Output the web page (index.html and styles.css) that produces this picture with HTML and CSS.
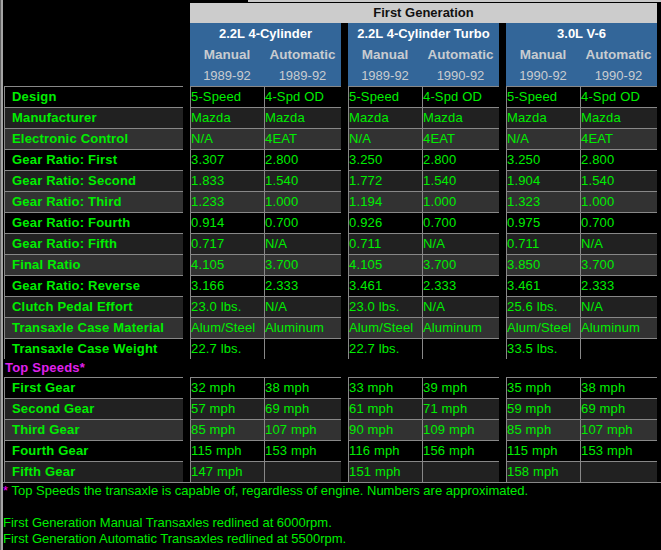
FILE: index.html
```html
<!DOCTYPE html>
<html>
<head>
<meta charset="utf-8">
<link rel="stylesheet" href="styles.css">
</head>
<body>
<div class="topstrip"></div>
<div class="head">
  <div class="gen">First Generation</div>
  <div class="groups">
    <div class="grp">
      <div class="grp-title">2.2L 4-Cylinder</div>
      <div class="grp-sub">
        <div class="ttype">Manual</div><div class="ttype">Automatic</div>
        <div class="yr">1989-92</div><div class="yr">1989-92</div>
      </div>
    </div>
    <div class="grp">
      <div class="grp-title">2.2L 4-Cylinder Turbo</div>
      <div class="grp-sub">
        <div class="ttype">Manual</div><div class="ttype">Automatic</div>
        <div class="yr">1989-92</div><div class="yr">1990-92</div>
      </div>
    </div>
    <div class="grp">
      <div class="grp-title">3.0L V-6</div>
      <div class="grp-sub">
        <div class="ttype">Manual</div><div class="ttype">Automatic</div>
        <div class="yr">1990-92</div><div class="yr">1990-92</div>
      </div>
    </div>
  </div>
</div>

<div class="table">
  <div class="row r0"><div class="lbl">Design</div><div class="c m g">5-Speed</div><div class="c a">4-Spd OD</div><div class="c m g">5-Speed</div><div class="c a">4-Spd OD</div><div class="c m g">5-Speed</div><div class="c a">4-Spd OD</div></div>
  <div class="row r1"><div class="lbl">Manufacturer</div><div class="c m g">Mazda</div><div class="c a">Mazda</div><div class="c m g">Mazda</div><div class="c a">Mazda</div><div class="c m g">Mazda</div><div class="c a">Mazda</div></div>
  <div class="row r2"><div class="lbl">Electronic Control</div><div class="c m g">N/A</div><div class="c a">4EAT</div><div class="c m g">N/A</div><div class="c a">4EAT</div><div class="c m g">N/A</div><div class="c a">4EAT</div></div>
  <div class="row r0"><div class="lbl">Gear Ratio: First</div><div class="c m g">3.307</div><div class="c a">2.800</div><div class="c m g">3.250</div><div class="c a">2.800</div><div class="c m g">3.250</div><div class="c a">2.800</div></div>
  <div class="row r1"><div class="lbl">Gear Ratio: Second</div><div class="c m g">1.833</div><div class="c a">1.540</div><div class="c m g">1.772</div><div class="c a">1.540</div><div class="c m g">1.904</div><div class="c a">1.540</div></div>
  <div class="row r2"><div class="lbl">Gear Ratio: Third</div><div class="c m g">1.233</div><div class="c a">1.000</div><div class="c m g">1.194</div><div class="c a">1.000</div><div class="c m g">1.323</div><div class="c a">1.000</div></div>
  <div class="row r0"><div class="lbl">Gear Ratio: Fourth</div><div class="c m g">0.914</div><div class="c a">0.700</div><div class="c m g">0.926</div><div class="c a">0.700</div><div class="c m g">0.975</div><div class="c a">0.700</div></div>
  <div class="row r1"><div class="lbl">Gear Ratio: Fifth</div><div class="c m g">0.717</div><div class="c a">N/A</div><div class="c m g">0.711</div><div class="c a">N/A</div><div class="c m g">0.711</div><div class="c a">N/A</div></div>
  <div class="row r2"><div class="lbl">Final Ratio</div><div class="c m g">4.105</div><div class="c a">3.700</div><div class="c m g">4.105</div><div class="c a">3.700</div><div class="c m g">3.850</div><div class="c a">3.700</div></div>
  <div class="row r0"><div class="lbl">Gear Ratio: Reverse</div><div class="c m g">3.166</div><div class="c a">2.333</div><div class="c m g">3.461</div><div class="c a">2.333</div><div class="c m g">3.461</div><div class="c a">2.333</div></div>
  <div class="row r1"><div class="lbl">Clutch Pedal Effort</div><div class="c m g">23.0 lbs.</div><div class="c a">N/A</div><div class="c m g">23.0 lbs.</div><div class="c a">N/A</div><div class="c m g">25.6 lbs.</div><div class="c a">N/A</div></div>
  <div class="row r2"><div class="lbl">Transaxle Case Material</div><div class="c m g">Alum/Steel</div><div class="c a">Aluminum</div><div class="c m g">Alum/Steel</div><div class="c a">Aluminum</div><div class="c m g">Alum/Steel</div><div class="c a">Aluminum</div></div>
  <div class="row r0"><div class="lbl">Transaxle Case Weight</div><div class="c m g">22.7 lbs.</div><div class="c a"></div><div class="c m g">22.7 lbs.</div><div class="c a"></div><div class="c m g">33.5 lbs.</div><div class="c a"></div></div>

  <div class="section">Top Speeds*</div>

  <div class="row r0"><div class="lbl">First Gear</div><div class="c m g">32 mph</div><div class="c a">38 mph</div><div class="c m g">33 mph</div><div class="c a">39 mph</div><div class="c m g">35 mph</div><div class="c a">38 mph</div></div>
  <div class="row r1"><div class="lbl">Second Gear</div><div class="c m g">57 mph</div><div class="c a">69 mph</div><div class="c m g">61 mph</div><div class="c a">71 mph</div><div class="c m g">59 mph</div><div class="c a">69 mph</div></div>
  <div class="row r2"><div class="lbl">Third Gear</div><div class="c m g">85 mph</div><div class="c a">107 mph</div><div class="c m g">90 mph</div><div class="c a">109 mph</div><div class="c m g">85 mph</div><div class="c a">107 mph</div></div>
  <div class="row r0"><div class="lbl">Fourth Gear</div><div class="c m g">115 mph</div><div class="c a">153 mph</div><div class="c m g">116 mph</div><div class="c a">156 mph</div><div class="c m g">115 mph</div><div class="c a">153 mph</div></div>
  <div class="row r1"><div class="lbl">Fifth Gear</div><div class="c m g">147 mph</div><div class="c a"></div><div class="c m g">151 mph</div><div class="c a"></div><div class="c m g">158 mph</div><div class="c a"></div></div>
</div>

<div class="notes">
  <span class="ast">*</span> Top Speeds the transaxle is capable of, regardless of engine. Numbers are approximated.<br>
  <br>
  First Generation Manual Transaxles redlined at 6000rpm.<br>
  First Generation Automatic Transaxles redlined at 5500rpm.
</div>
</body>
</html>
```

FILE: styles.css
```css
* { box-sizing: border-box; }

html {
  background: #000;
  border-left: 1px solid #606060;
}

body {
  margin: 0;
  min-height: 550px;
  background: #000;
  border-left: 2px solid #a4a4a4;
  font-family: "Liberation Sans", Arial, sans-serif;
  font-size: 13px;
  color: #00ee00;
}

.topstrip {
  height: 2px;
  margin-left: 245px;
  margin-bottom: 1px;
  background: #c8c8c8;
}

.head {
  margin-left: 187px;
  width: 467px;
}

.gen {
  height: 20px;
  line-height: 20px;
  background: #cccccc;
  color: #111;
  font-weight: bold;
  text-align: center;
}

.groups {
  display: flex;
  gap: 7px;
}

.grp {
  width: 151px;
  background: #336699;
}

.grp-title {
  height: 21px;
  line-height: 21px;
  text-align: center;
  color: #fff;
  font-weight: bold;
}

.grp-sub {
  display: grid;
  grid-template-columns: 74px 77px;
  grid-auto-rows: 21px;
}

.ttype {
  line-height: 21px;
  text-align: center;
  font-weight: bold;
  font-size: 13.5px;
  color: #c8ccd0;
}

.yr {
  line-height: 21px;
  text-align: center;
  color: #c8ccd0;
}

.table {
  margin-left: 1px;
}

.row {
  display: flex;
  height: 21px;
}

.lbl, .c {
  border-top: 1px solid #888;
  border-left: 1px solid #888;
  line-height: 20px;
  white-space: nowrap;
  overflow: hidden;
}

.lbl {
  width: 179px;
  padding-left: 7px;
  font-weight: bold;
  letter-spacing: 0.2px;
}

.c {
  letter-spacing: 0.15px;
}

.c.m { width: 74px; }
.c.a { width: 77px; }
.c.g { margin-left: 7px; }

.r0 .lbl, .r0 .c { background: #000; }
.r1 .lbl, .r1 .c { background: #212121; }
.r2 .lbl, .r2 .c { background: #323232; }

.section {
  height: 18px;
  line-height: 18px;
  padding-left: 1px;
  font-weight: bold;
  color: #e020ee;
  letter-spacing: 0.2px;
}

.notes {
  border-top: 1px solid #888;
  line-height: 16px;
}

.ast {
  color: #ff00ff;
}
```
